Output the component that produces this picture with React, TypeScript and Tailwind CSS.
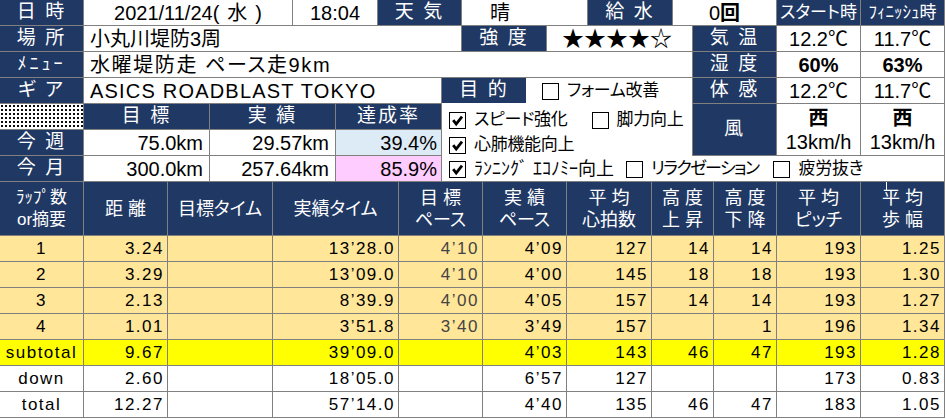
import type { ReactNode } from 'react'

type CellProps = { cls: string; children?: ReactNode }

// gray Excel grid line on right and bottom
function C({ cls, children }: CellProps) {
  return <div className={`flex items-center border-r border-b border-[#808080] ${cls}`}>{children}</div>
}

function Box({ on }: { on?: boolean }) {
  return (
    <span className="flex h-[17px] w-[17px] shrink-0 items-center justify-center border border-black bg-white">
      {on && (
        <svg width="13" height="13" viewBox="0 0 13 13">
          <path d="M2.2 6.2 L5.2 10 L11 2.6" fill="none" stroke="black" strokeWidth="2.8" />
        </svg>
      )}
    </span>
  )
}

function Check({ on, label, cls = '', text = 'text-[17px] tracking-[-0.3px]' }: { on?: boolean; label: string; cls?: string; text?: string }) {
  return (
    <span className={`flex items-center ${cls}`}>
      <Box on={on} />
      <span className={`ml-[8px] whitespace-nowrap ${text}`}>{label}</span>
    </span>
  )
}

const navy = 'bg-[#203864] text-white justify-center text-[19px] tracking-[2px]'

type Row = { kind: 'lap' | 'sub' | 'plain'; v: string[] }

const rows: Row[] = [
  { kind: 'lap', v: ['1', '3.24', '', '13’28.0', '4’10', '4’09', '127', '14', '14', '193', '1.25'] },
  { kind: 'lap', v: ['2', '3.29', '', '13’09.0', '4’10', '4’00', '145', '18', '18', '193', '1.30'] },
  { kind: 'lap', v: ['3', '2.13', '', '8’39.9', '4’00', '4’05', '157', '14', '14', '193', '1.27'] },
  { kind: 'lap', v: ['4', '1.01', '', '3’51.8', '3’40', '3’49', '157', '', '1', '196', '1.34'] },
  { kind: 'sub', v: ['subtotal', '9.67', '', '39’09.0', '', '4’03', '143', '46', '47', '193', '1.28'] },
  { kind: 'plain', v: ['down', '2.60', '', '18’05.0', '', '6’57', '127', '', '', '173', '0.83'] },
  { kind: 'plain', v: ['total', '12.27', '', '57’14.0', '', '4’40', '135', '46', '47', '183', '1.05'] },
]

const heads: string[][] = [
  ['ﾗｯﾌﾟ数', 'or摘要'],
  ['距 離'],
  ['目標タイム'],
  ['実績タイム'],
  ['目 標', 'ペース'],
  ['実 績', 'ペース'],
  ['平 均', '心拍数'],
  ['高 度', '上 昇'],
  ['高 度', '下 降'],
  ['平 均', 'ピッチ'],
  ['平 均', '歩 幅'],
]

export default function App() {
  return (
    <div className="h-[419px] w-[946px] overflow-hidden bg-white font-['Liberation_Sans','Noto_Sans_CJK_JP',sans-serif] text-black [font-feature-settings:'palt']">
      {/* upper info sheet */}
      <div className="grid grid-cols-[84px_126px_83px_43px_42px_64px_20px_64px_21px_41px_85px_20px_84px_84px_84px] grid-rows-[repeat(7,26px)] text-[20px]">
        {/* row 1 */}
        <C cls={`col-start-1 row-start-1 ${navy}`}>日 時</C>
        <C cls="col-start-2 col-span-2 row-start-1 justify-center">
          2021/11/24(<span className="px-[8px]">水</span>)
        </C>
        <C cls="col-start-4 col-span-2 row-start-1 justify-center">18:04</C>
        <C cls={`col-start-6 col-span-2 row-start-1 ${navy}`}>天 気</C>
        <C cls="col-start-8 col-span-3 row-start-1 pl-[28px]">晴</C>
        <C cls={`col-start-11 row-start-1 ${navy}`}>給 水</C>
        <C cls="col-start-12 col-span-2 row-start-1 justify-center">
          0<span className="font-bold">回</span>
        </C>
        <C cls="col-start-14 row-start-1 justify-center bg-[#203864] text-[17px] text-white">スタート時</C>
        <C cls="col-start-15 row-start-1 justify-center bg-[#203864] text-[17px] text-white [font-feature-settings:normal]">ﾌｨﾆｯｼｭ時</C>

        {/* row 2 */}
        <C cls={`col-start-1 row-start-2 ${navy}`}>場 所</C>
        <C cls="col-start-2 col-span-6 row-start-2 pl-[6px]">小丸川堤防3周</C>
        <C cls={`col-start-8 col-span-2 row-start-2 ${navy}`}>強 度</C>
        <C cls="col-start-10 col-span-3 row-start-2 pl-[15px] text-[22px] leading-none">★★★★☆</C>
        <C cls={`col-start-13 row-start-2 ${navy}`}>気 温</C>
        <C cls="col-start-14 row-start-2 justify-center">12.2℃</C>
        <C cls="col-start-15 row-start-2 justify-center">11.7℃</C>

        {/* row 3 */}
        <C cls="col-start-1 row-start-3 justify-center bg-[#203864] text-[18px] tracking-[3px] text-white [font-feature-settings:normal]">ﾒﾆｭｰ</C>
        <C cls="col-start-2 col-span-11 row-start-3 pl-[6px] tracking-[1.6px]">水曜堤防走 ペース走9km</C>
        <C cls={`col-start-13 row-start-3 ${navy}`}>湿 度</C>
        <C cls="col-start-14 row-start-3 justify-center font-bold">60%</C>
        <C cls="col-start-15 row-start-3 justify-center font-bold">63%</C>

        {/* row 4 */}
        <C cls={`col-start-1 row-start-4 ${navy}`}>ギ ア</C>
        <C cls="col-start-2 col-span-5 row-start-4 pl-[6px] tracking-[1.2px]">ASICS ROADBLAST TOKYO</C>
        <div className={`col-start-7 col-span-2 row-start-4 flex items-center border-b border-white ${navy}`}>目 的</div>
        <div className="col-start-9 col-span-4 row-start-4 flex items-center border-r border-[#808080] pl-[16px]">
          <Check label="フォーム改善" />
        </div>
        <C cls={`col-start-13 row-start-4 ${navy}`}>体 感</C>
        <C cls="col-start-14 row-start-4 justify-center">12.2℃</C>
        <C cls="col-start-15 row-start-4 justify-center">11.7℃</C>

        {/* row 5 */}
        <C cls="col-start-1 row-start-5 bg-[radial-gradient(circle,#000_0.7px,transparent_0.9px)] bg-[length:4px_4px]" />
        <C cls={`col-start-2 row-start-5 ${navy}`}>目 標</C>
        <C cls={`col-start-3 col-span-2 row-start-5 ${navy}`}>実 績</C>
        <C cls={`col-start-5 col-span-2 row-start-5 ${navy}`}>達成率</C>
        <div className="col-start-7 col-span-6 row-start-5 flex items-center border-r border-[#808080] pl-[7px] pt-[6px]">
          <Check on label="スピード強化" />
          <Check label="脚力向上" cls="ml-[24px]" />
        </div>
        <C cls={`col-start-13 row-start-5 row-span-2 ${navy}`}>風</C>
        <C cls="col-start-14 row-start-5 row-span-2 flex-col justify-center leading-[24px]">
          <span className="font-bold">西</span>
          <span>13km/h</span>
        </C>
        <C cls="col-start-15 row-start-5 row-span-2 flex-col justify-center leading-[24px]">
          <span className="font-bold">西</span>
          <span>13km/h</span>
        </C>

        {/* row 6 */}
        <C cls={`col-start-1 row-start-6 ${navy}`}>今 週</C>
        <C cls="col-start-2 row-start-6 justify-end pr-[6px]">75.0km</C>
        <C cls="col-start-3 col-span-2 row-start-6 justify-end pr-[6px]">29.57km</C>
        <C cls="col-start-5 col-span-2 row-start-6 justify-end bg-[#ddebf7] pr-[4px]">39.4%</C>
        <div className="col-start-7 col-span-6 row-start-6 flex items-center border-r border-[#808080] pl-[7px] pt-[4px]">
          <Check on label="心肺機能向上" />
        </div>

        {/* row 7 */}
        <C cls={`col-start-1 row-start-7 ${navy}`}>今 月</C>
        <C cls="col-start-2 row-start-7 justify-end pr-[6px]">300.0km</C>
        <C cls="col-start-3 col-span-2 row-start-7 justify-end pr-[6px]">257.64km</C>
        <C cls="col-start-5 col-span-2 row-start-7 justify-end bg-[#ffccff] pr-[4px]">85.9%</C>
        <C cls="col-start-7 col-span-9 row-start-7 pl-[7px] pt-[1px]">
          <Check on label="ﾗﾝﾆﾝｸﾞ ｴｺﾉﾐｰ向上" text="text-[18px] [font-feature-settings:normal]" />
          <Check label="リラクゼーション" cls="ml-[12px]" text="text-[17px] tracking-[-1.6px]" />
          <Check label="疲労抜き" cls="ml-[15px]" />
        </C>
      </div>

      {/* lap table */}
      <div className="relative grid grid-cols-[84px_84px_105px_126px_84px_84px_85px_62px_63px_84px_84px] grid-rows-[54px_repeat(7,26px)]">
        {heads.map((h, i) => (
          <C key={i} cls="flex-col justify-center bg-[#203864] text-[18px] leading-[22px] text-white">
            {h.map((t) => (
              <span key={t} className={`whitespace-nowrap ${i === 0 ? 'text-[17px] [font-feature-settings:normal]' : ''}`}>
                {t}
              </span>
            ))}
          </C>
        ))}
        <span className="absolute left-[886px] top-0 h-[9px] w-px bg-white" />
        {rows.map((r) =>
          r.v.map((t, i) => (
            <C
              key={r.v[0] + i}
              cls={`text-[17px] tracking-[1.5px] ${
                r.kind === 'lap' ? 'bg-[#ffe699]' : r.kind === 'sub' ? 'bg-[#ffff00]' : 'bg-white'
              } ${i === 0 ? 'justify-center' : 'justify-end pr-[3px]'} ${i === 4 ? 'text-[#444]' : ''}`}
            >
              {t}
            </C>
          )),
        )}
      </div>
    </div>
  )
}
